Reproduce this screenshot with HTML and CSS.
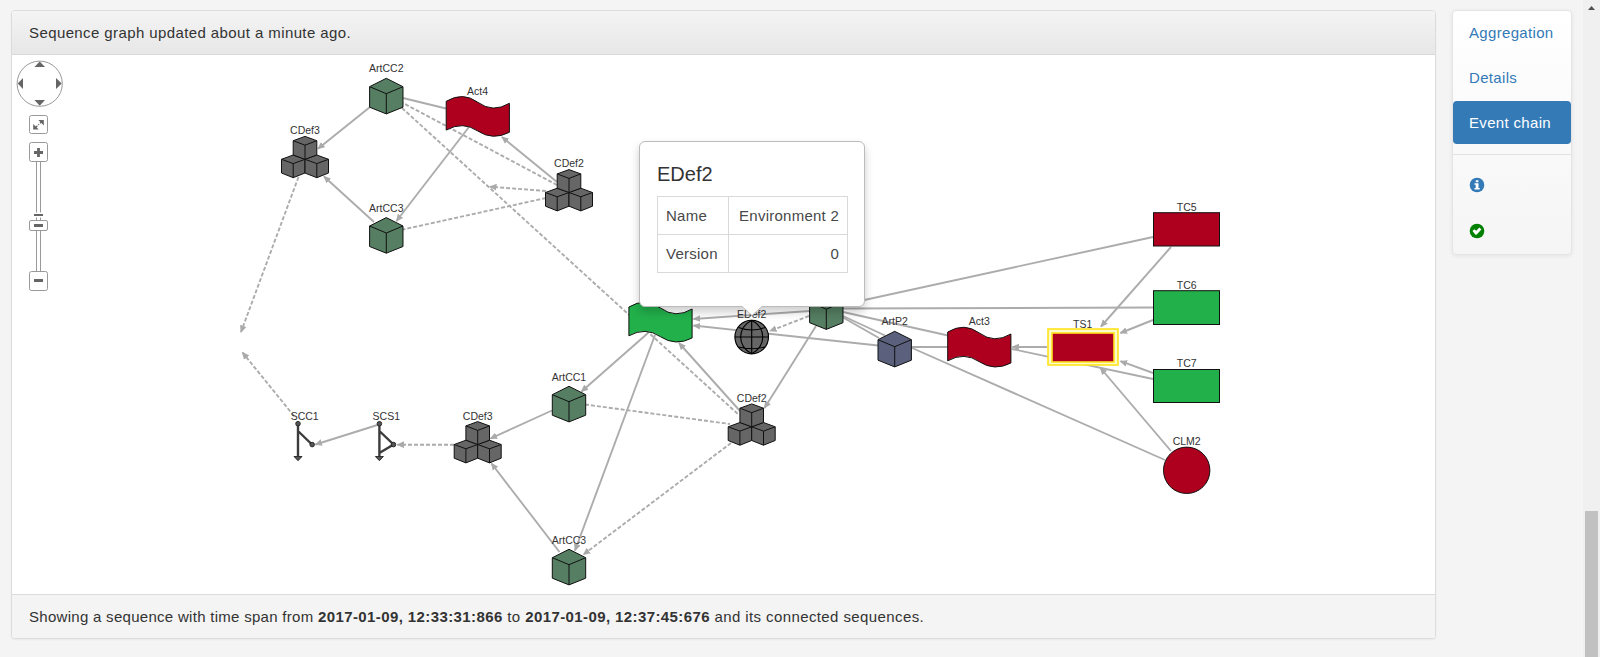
FILE: index.html
```html
<!DOCTYPE html>
<html lang="en">
<head>
<meta charset="utf-8">
<title>Event chain</title>
<link rel="stylesheet" href="styles.css">
</head>
<body>
<div class="page">
  <main class="panel">
    <header class="panel-heading">Sequence graph updated about a minute ago.</header>
    <section class="graph">
      <svg class="canvas" viewBox="12 55 1423 539" width="1423" height="539">
        <defs>
          <marker id="arrow" viewBox="0 0 8 8" refX="7" refY="4" markerWidth="7.5" markerHeight="7.5" markerUnits="userSpaceOnUse" orient="auto"><path d="M0 0.4L8 4L0 7.6z" fill="#aaa"/></marker>
          <g id="cube">
            <path d="M0-17.7L16.7-9.3V11.2L0 17.9L-16.7 11.2V-9.3z"/>
            <path class="inner" d="M-16.7-9.3L0-2.3L16.7-9.3M0-2.3V17.9"/>
          </g>
          <g id="cubes">
            <path d="M-11.8-4L0 .3V14L-11.8 18.7L-23.5 14V.3z"/><path d="M-23.5 .3L-11.8 4.6L0 .3M-11.8 4.6V18.7"/>
            <path d="M11.8-4L23.5 .3V14L11.8 18.7L0 14V.3z"/><path d="M0 .3L11.8 4.6L23.5 .3M11.8 4.6V18.7"/>
            <path d="M0-22.6L11.8-18.3V-4L0 .3L-11.8-4V-18.3z"/><path d="M-11.8-18.3L0-13.8L11.8-18.3M0-13.8V.3"/>
          </g>
          <path id="flag" d="M-31.6-15Q-15-25 0-14Q15-3 31.6-13V16Q15 24.6 0 14.7Q-15 4.5-31.6 13.8z"/>
        </defs>

        <g class="edges">
          <path d="M370 107L318 148.7"/><path d="M374 222L324 176.5"/>
          <path d="M469 127L396.500 221"/><path d="M557 182L502 137"/>
          <path d="M379 424.500L315.500 444.500"/><path d="M552 410.500L490.500 438.500"/>
          <path d="M559.500 552L491.500 463.500"/><path d="M648 333L581.500 391.500"/>
          <path d="M655 335L575 550.500"/><path d="M740 411L679 343"/>
          <path d="M816 326L764.500 408"/><path d="M810 311L693.500 319"/>
          <path d="M878 345.500L693.500 325.500"/><path d="M1047 347H1012.500"/>
          <path d="M1171 247L1101 326.500"/><path d="M1153 320L1120.500 333"/>
          <path d="M1153 373L1120.500 361.200"/><path d="M1171 451L1100.500 368"/>
        </g>
        <g class="edges dashed">
          <path d="M546 191L490 186.700"/><path d="M298.500 177L241 332"/>
          <path d="M294 416L242.500 352.500"/><path d="M454 444.700H397.500"/>
          <path d="M731 443L583.500 554.500"/><path d="M809 316L770 331"/>
        </g>
        <g class="edges plain">
          <path d="M403 98L446 108.500"/><path d="M1153 237L846 304"/>
          <path d="M1153 307.500L843 308.500"/><path d="M948 335.500L843 312"/>
          <path d="M843 316L885 335.500M911 347.500L1165 460"/><path d="M843 317.500L879 338"/>
          <path d="M911 347H948"/><path d="M1153 379L1012 349"/>
        </g>
        <g class="edges dashed plain">
          <path d="M557 185L403 103"/><path d="M402 108L739 415"/>
          <path d="M546 198L403 229.500"/><path d="M585 404.500L730 424"/>
        </g>

        <g class="node artifact">
          <use href="#cube" x="386.300" y="96"/><use href="#cube" x="386.300" y="235.300"/>
          <use href="#cube" x="569" y="404"/><use href="#cube" x="569" y="567"/>
          <use href="#cube" x="826.300" y="311.500"/>
        </g>
        <g class="node product"><use href="#cube" x="894.700" y="349"/></g>
        <g class="node definition">
          <use href="#cubes" x="305" y="159"/><use href="#cubes" x="569" y="192.200"/>
          <use href="#cubes" x="477.700" y="444.200"/><use href="#cubes" x="751.700" y="426.500"/>
        </g>
        <g class="node failed">
          <use href="#flag" x="477.800" y="116.300"/><use href="#flag" x="979.300" y="347"/>
          <rect x="1153.500" y="212.700" width="66" height="33.300"/>
          <circle cx="1186.700" cy="470.300" r="23.200"/>
        </g>
        <g class="node passed">
          <use href="#flag" x="660.500" y="322"/>
          <rect x="1153.500" y="290.700" width="66" height="33.800"/>
          <rect x="1153.500" y="369.500" width="66" height="33"/>
        </g>
        <g class="selected">
          <rect class="halo" x="1048" y="329" width="70" height="36"/>
          <rect class="gap" x="1050" y="331" width="66" height="32"/>
          <rect class="core" x="1052" y="333" width="62" height="29"/>
        </g>
        <g class="globe">
          <circle cx="751.700" cy="337" r="16.800"/>
          <path d="M734.900 337H768.500M751.700 320.200V353.800M751.700 320.200C737 328 737 346 751.700 353.800M751.700 320.200C766.400 328 766.400 346 751.700 353.800M738.500 327.500Q751.700 332.500 765 327.500M738.500 347Q751.700 350.500 765 347"/>
        </g>
        <g class="confidence">
          <path class="bar" d="M298 424V456M298 431L312 444.500"/>
          <path class="bar" d="M379.400 424V456M379.400 431L393.500 444.500L379.400 453"/>
          <path class="tip" d="M294 456.500H302L298 460.700zM375.400 456.500H383.400L379.400 460.700z"/>
          <circle cx="298" cy="423.700" r="2.300"/><circle cx="312.200" cy="444.600" r="2.300"/>
          <circle cx="379.400" cy="423.700" r="2.300"/><circle cx="393.500" cy="444.600" r="2.300"/>
        </g>

        <g class="labels">
          <text x="386.300" y="72.300">ArtCC2</text><text x="477.500" y="94.800">Act4</text>
          <text x="305" y="134">CDef3</text><text x="569" y="167.200">CDef2</text>
          <text x="386.300" y="211.600">ArtCC3</text><text x="569" y="380.600">ArtCC1</text>
          <text x="304.700" y="419.500">SCC1</text><text x="386.300" y="419.500">SCS1</text>
          <text x="477.700" y="419.500">CDef3</text><text x="569" y="543.500">ArtCC3</text>
          <text x="751.700" y="401.700">CDef2</text><text x="751.700" y="317.800">EDef2</text>
          <text x="894.700" y="324.500">ArtP2</text><text x="979.300" y="324.500">Act3</text>
          <text x="1082.700" y="328">TS1</text><text x="1186.700" y="211">TC5</text>
          <text x="1186.700" y="288.700">TC6</text><text x="1186.700" y="367.300">TC7</text>
          <text x="1186.700" y="445.200">CLM2</text>
        </g>

        <g class="controls">
          <circle cx="39.700" cy="83.700" r="22.600"/>
          <path class="glyph" d="M39.700 61.500L45 67H34.400zM39.700 105.700L45 100H34.400zM17.700 83.500L23 78V89zM61.700 83.500L56 78V89z"/>
          <path d="M36.500 162V271M40.500 162V271"/>
          <rect x="29.500" y="115.500" width="18" height="18" rx="2"/>
          <rect x="29.500" y="142.500" width="18" height="19" rx="2"/>
          <rect x="29.500" y="271.500" width="18" height="19" rx="2"/>
          <rect x="33" y="212.500" width="11" height="5" class="mask"/>
          <rect x="29.500" y="220.500" width="18" height="10" rx="1.500"/>
          <path class="glyph" d="M43.800 120V125.500L38.300 120zM33.200 129.500V124L38.700 129.500z"/>
          <path class="thin" d="M34.500 128.500L42.500 121" stroke-dasharray="4 1.300 1 1.300 4"/>
          <path class="thick" d="M34 152.500H43M38.500 148V157M34 280.500H43M34 225.500H43"/>
          <path class="tick" d="M34 215H43"/>
        </g>
      </svg>
      <aside class="tooltip">
        <h4 class="tooltip-title">EDef2</h4>
        <table class="facts">
          <tr><td class="key">Name</td><td class="value">Environment 2</td></tr>
          <tr><td class="key">Version</td><td class="value">0</td></tr>
        </table>
      </aside>
    </section>
    <footer class="panel-footer"><span class="lead">Showing a sequence with time span from </span><b>2017-01-09, 12:33:31:866</b> to <b>2017-01-09, 12:37:45:676</b> and its connected sequences.</footer>
  </main>
  <nav class="side-nav">
    <a class="nav-item">Aggregation</a>
    <a class="nav-item">Details</a>
    <a class="nav-item active">Event chain</a>
    <hr class="divider">
    <a class="nav-item icon-item"><svg width="16" height="16" viewBox="0 0 16 16"><circle cx="8" cy="8" r="7.300" fill="#337ab7"/><path fill="#fff" d="M6.800 3.200H9.400V5.200H6.800zM5.500 6.300H9.500V11H10.700V12.500H5.500V11H6.700V7.700H5.500z"/></svg></a>
    <a class="nav-item icon-item last"><svg width="16" height="16" viewBox="0 0 16 16"><circle cx="8" cy="8" r="7.300" fill="#008000"/><path fill="#fff" d="M3.500 8L5.300 6.200L7.200 7.700L10.400 4.500L12.400 6.500L7.500 11.700H6.500z"/></svg></a>
  </nav>
  <div class="scrollbar">
    <svg class="scroll-up" width="7" height="4" viewBox="0 0 7 4"><path d="M0 4L3.500 0L7 4z" fill="#505050"/></svg>
    <div class="thumb"></div>
  </div>
</div>
</body>
</html>
```
FILE: styles.css
```css
* { box-sizing: border-box; }
body {
  margin: 0;
  height: 657px;
  overflow: hidden;
  background: #f4f4f4;
  color: #333;
  font: 15px/22px "Liberation Sans", Arial, sans-serif;
  letter-spacing: 0.4px;
}
.page { display: flex; align-items: flex-start; height: 657px; padding-left: 11px; }
.panel {
  width: 1425px;
  height: 629px;
  margin-top: 10px;
  display: flex;
  flex-direction: column;
  background: #fff;
  border: 1px solid #dcdcdc;
  border-radius: 4px;
  box-shadow: 0 1px 2px rgba(0, 0, 0, .05);
  flex: none;
}
.panel-heading {
  height: 44px;
  padding: 11px 17px 0;
  border-bottom: 1px solid #d9d9d9;
  border-radius: 3px 3px 0 0;
  background: linear-gradient(#f4f4f4, #e7e7e7);
}
.panel-footer {
  height: 44px;
  padding: 11px 17px 0;
  border-top: 1px solid #dcdcdc;
  border-radius: 0 0 3px 3px;
  background: #f4f4f4;
}
.lead { letter-spacing: .29px; }
.graph { position: relative; height: 539px; }
.canvas { display: block; }

.edges path { fill: none; stroke: #acacac; stroke-width: 1.9; marker-end: url(#arrow); }
.dashed path { stroke-dasharray: 4 2; }
.edges.plain path { marker-end: none; }
.node { stroke: #111; stroke-width: 1; }
.node .inner { fill: none; }
.artifact { fill: #557e62; }
.product { fill: #5b617d; }
.definition { fill: #666; }
.failed { fill: #ae001e; }
.passed { fill: #22b04b; }
.halo { fill: #fff7b0; stroke: #ffe41f; stroke-width: 1.6; }
.gap { fill: none; stroke: #fffbd8; stroke-width: 1.4; }
.core { fill: #ae001e; stroke: #ffe41f; stroke-width: 1.6; }
.globe { fill: #666; stroke: #000; stroke-width: 1.15; }
.globe path { fill: none; }
.confidence circle, .tip { fill: #555; stroke: #222; stroke-width: .9; }
.bar { fill: none; stroke: #3c3c3c; stroke-width: 2.4; }
.labels { fill: #333; font-size: 10.5px; letter-spacing: 0; text-anchor: middle; }

.controls { fill: #fff; stroke: #999; stroke-width: 1; }
.controls .glyph { fill: #666; stroke: none; }
.controls .mask { stroke: none; }
.controls .thin { stroke: #666; stroke-width: 1.3; }
.controls .thick { stroke: #666; stroke-width: 2.8; }
.controls .tick { stroke: #666; stroke-width: 2; }

.tooltip {
  position: absolute;
  left: 627px;
  top: 86px;
  width: 226px;
  height: 166px;
  padding: 17px;
  border: 1px solid #bbb;
  border-radius: 6px;
  background: #fff;
  box-shadow: 0 5px 10px rgba(0, 0, 0, .2);
}
.tooltip::before, .tooltip::after {
  content: "";
  position: absolute;
  left: 101px;
  top: 164px;
  border: 11px solid transparent;
  border-top: 10px solid #bbb;
  border-bottom: 0;
}
.tooltip::after { top: 163px; border-top-color: #fff; }
.tooltip-title { margin: 3px 0 10px; height: 24px; font: 20px/24px "Liberation Sans", Arial, sans-serif; letter-spacing: 0; }
.facts { width: 191px; border-collapse: collapse; letter-spacing: .25px; color: #484848; table-layout: fixed; }
.facts td { height: 38px; padding: 0 8px; border: 1px solid #d9d9d9; white-space: nowrap; }
.facts .key { width: 71px; }
.facts .value { text-align: right; }

.side-nav {
  flex: none;
  width: 120px;
  height: 245px;
  margin: 10px 0 0 16px;
  border: 1px solid #e4e4e4;
  border-radius: 4px;
  background: linear-gradient(#fff, #f5f5f5);
  box-shadow: 0 1px 4px rgba(0, 0, 0, .07);
}
.nav-item { display: block; height: 43px; margin-bottom: 2px; padding: 11px 16px 0; color: #337ab7; letter-spacing: .33px; white-space: nowrap; }
.nav-item.active { background: #337ab7; color: #fff; border-radius: 4px; }
.divider { height: 1px; margin: 10px 0 9px; border: 0; background: #e2e2e2; }
.icon-item { margin-bottom: 3px; padding: 13px 16px 0; }
.icon-item svg { display: block; }
.icon-item.last { margin-bottom: 0; }

.scrollbar { width: 17px; height: 657px; margin-left: auto; padding-left: 2px; background: #f0f0f0; flex: none; }
.scroll-up { display: block; margin: 6px 0 501px 3px; }
.thumb { width: 13px; height: 146px; background: #c1c1c1; }
```
